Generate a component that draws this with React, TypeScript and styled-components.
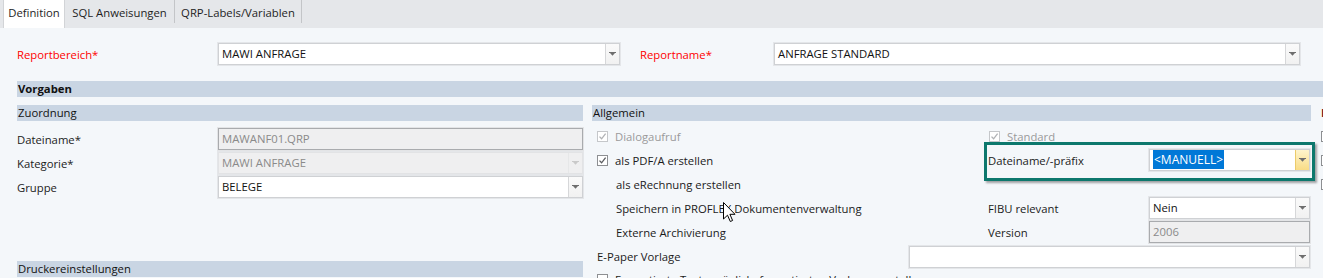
import React from 'react';
import styled, { createGlobalStyle } from 'styled-components';

const FONT = '"Open Sans", "Noto Sans", "Liberation Sans", sans-serif';

const Global = createGlobalStyle`
  html, body { margin: 0; padding: 0; background: #f4f7fa; overflow: hidden; }
  body { font-family: ${FONT}; font-size: 11.3px; color: #1b1b1b; }
  * { box-sizing: border-box; }
`;

const Page = styled.div`
  position: relative;
  width: 1323px;
  height: 278px;
  overflow: hidden;
  background: #f4f7fa;
`;

const TabBar = styled.div`
  display: flex;
  align-items: flex-start;
  height: 28px;
  padding-left: 3px;
  background: #e5e7ea;
`;

const Tab = styled.div<{ $active?: boolean; $w: number }>`
  width: ${(p) => p.$w}px;
  height: ${(p) => (p.$active ? 28 : 23)}px;
  line-height: 25px;
  text-align: center;
  white-space: nowrap;
  color: #1e1e1e;
  background: ${(p) => (p.$active ? '#ffffff' : 'transparent')};
  border-left: ${(p) => (p.$active ? '1px solid #d2d4d7' : 'none')};
  border-right: 1px solid ${(p) => (p.$active ? '#d2d4d7' : '#c3c5c8')};
`;

const Content = styled.div`
  padding: 15px 0 0 17px;
`;

const TopRow = styled.div`
  display: flex;
  align-items: center;
  height: 22px;
`;

const Label = styled.div<{ $w?: number; $red?: boolean; $ml?: number; $pl?: number }>`
  width: ${(p) => (p.$w ? `${p.$w}px` : 'auto')};
  margin-left: ${(p) => p.$ml ?? 0}px;
  padding-left: ${(p) => p.$pl ?? 0}px;
  color: ${(p) => (p.$red ? '#ff0000' : '#1b1b1b')};
  white-space: nowrap;
  flex-shrink: 0;
`;

const SectionBar = styled.div<{ $bold?: boolean; $mt?: number }>`
  height: 16px;
  line-height: 16px;
  margin-top: ${(p) => p.$mt ?? 0}px;
  padding-left: 1px;
  background: #c9d5e3;
  font-weight: ${(p) => (p.$bold ? 700 : 400)};
  color: #111;
  white-space: nowrap;
`;

const Columns = styled.div`
  display: flex;
  margin-top: 8px;
`;

const LeftCol = styled.div`
  width: 566px;
  flex-shrink: 0;
`;

const RightCol = styled.div`
  width: 719px;
  margin-left: 9px;
  flex-shrink: 0;
`;

const ThirdCol = styled.div`
  width: 120px;
  margin-left: 10px;
  flex-shrink: 0;
`;

const Rows = styled.div<{ $mt: number }>`
  margin-top: ${(p) => p.$mt}px;
`;

const LeftRow = styled.div`
  display: flex;
  align-items: center;
  height: 24px;
`;

const RightRow = styled.div<{ $h?: number; $top?: boolean }>`
  display: grid;
  grid-template-columns: 392px 165px 162px;
  align-items: ${(p) => (p.$top ? 'start' : 'center')};
  height: ${(p) => p.$h ?? 24}px;
  padding-top: ${(p) => (p.$top ? 3 : 0)}px;
`;

const PaperRow = styled.div`
  display: flex;
  align-items: center;
  height: 25px;
`;

const BoxShell = styled.div<{ $w: number; $disabled?: boolean; $plain?: boolean }>`
  display: flex;
  align-items: stretch;
  width: ${(p) => p.$w}px;
  height: 22px;
  flex-shrink: 0;
  background: ${(p) => (p.$disabled ? '#efeff0' : '#ffffff')};
  border: 1px solid
    ${(p) => (p.$plain ? '#a9abae' : p.$disabled ? '#e2e3e5' : '#cfd1d4')};
  box-shadow: 0 0 0 1px ${(p) => (p.$plain ? '#e3e4e6' : '#e4e6e9')};
`;

const BoxText = styled.div<{ $disabled?: boolean }>`
  flex: 1;
  padding-left: 3px;
  line-height: 20px;
  color: ${(p) => (p.$disabled ? '#8a8a8a' : '#111')};
  white-space: nowrap;
  overflow: hidden;
`;

const Selected = styled.span`
  background: #0078d7;
  color: #ffffff;
  padding: 1px 1px;
  font-size: 12px;
`;

const DropBtn = styled.div<{ $hover?: boolean; $disabled?: boolean }>`
  width: 14px;
  display: flex;
  align-items: center;
  justify-content: center;
  border-left: 1px solid
    ${(p) => (p.$hover ? '#eccb6a' : p.$disabled ? '#e6e7e8' : '#d6d7d9')};
  background: ${(p) =>
    p.$hover
      ? 'linear-gradient(#fef4cc, #f9dc86)'
      : p.$disabled
      ? '#efeff0'
      : 'linear-gradient(#fafafa, #f1f1f1)'};
`;

const Arrow = ({ color }: { color: string }) => (
  <svg width="7" height="4" viewBox="0 0 7 4">
    <rect x="0" y="0" width="7" height="1" fill={color} />
    <polygon points="1,1 6,1 3.5,3.8" fill={color} />
  </svg>
);

type ComboProps = {
  w: number;
  value?: React.ReactNode;
  disabled?: boolean;
  hover?: boolean;
  plain?: boolean;
};

const Combo = ({ w, value, disabled, hover, plain }: ComboProps) => (
  <BoxShell $w={w} $disabled={disabled || plain} $plain={plain}>
    <BoxText $disabled={disabled || plain}>{value}</BoxText>
    {!plain && (
      <DropBtn $hover={hover} $disabled={disabled}>
        <Arrow color={disabled ? '#c9c9c9' : '#6e6e6e'} />
      </DropBtn>
    )}
  </BoxShell>
);

const CheckBox = styled.span<{ $disabled?: boolean }>`
  display: inline-flex;
  align-items: center;
  justify-content: center;
  width: 11px;
  height: 11px;
  flex-shrink: 0;
  background: #ffffff;
  border: 1px solid ${(p) => (p.$disabled ? '#c5c7ca' : '#8d8f92')};
`;

const CheckItem = styled.div<{ $pl?: number; $disabled?: boolean }>`
  display: flex;
  align-items: center;
  gap: 7px;
  padding-left: ${(p) => p.$pl ?? 5}px;
  color: ${(p) => (p.$disabled ? '#9a9a9a' : '#1b1b1b')};
  white-space: nowrap;
`;

const Check = ({ checked, disabled }: { checked?: boolean; disabled?: boolean }) => (
  <CheckBox $disabled={disabled}>
    {checked && (
      <svg width="9" height="9" viewBox="0 0 9 9">
        <path
          d="M1.5 4.6 L3.6 6.8 L7.6 1.6"
          fill="none"
          stroke={disabled ? '#b0b2b5' : '#5a5c5f'}
          strokeWidth="1.3"
        />
      </svg>
    )}
  </CheckBox>
);

const ThirdHead = styled.div`
  height: 16px;
  line-height: 16px;
  color: #6e1423;
  font-weight: 700;
  white-space: nowrap;
`;

const ThirdRow = styled.div`
  display: flex;
  align-items: center;
  height: 24px;
`;

const Highlight = styled.div`
  position: absolute;
  left: 984px;
  top: 142px;
  width: 331px;
  height: 39px;
  border: 3px solid #0d786d;
  box-shadow: 2px 2px 2px rgba(0, 0, 0, 0.35);
  pointer-events: none;
`;

const Cursor = styled.svg`
  position: absolute;
  left: 723px;
  top: 202px;
`;

export default function App() {
  return (
    <>
      <Global />
      <Page>
        <TabBar>
          <Tab $active $w={62}>Definition</Tab>
          <Tab $w={110}>SQL Anweisungen</Tab>
          <Tab $w={127}>QRP-Labels/Variablen</Tab>
        </TabBar>
        <Content>
          <TopRow>
            <Label $w={201} $red>Reportbereich*</Label>
            <Combo w={402} value="MAWI ANFRAGE" />
            <Label $w={134} $ml={20} $red>Reportname*</Label>
            <Combo w={526} value="ANFRAGE STANDARD" />
          </TopRow>
          <SectionBar $bold $mt={16}>Vorgaben</SectionBar>
          <Columns>
            <LeftCol>
              <SectionBar>Zuordnung</SectionBar>
              <Rows $mt={6}>
                <LeftRow>
                  <Label $w={201}>Dateiname*</Label>
                  <Combo w={365} value="MAWANF01.QRP" plain />
                </LeftRow>
                <LeftRow>
                  <Label $w={201}>Kategorie*</Label>
                  <Combo w={365} value="MAWI ANFRAGE" disabled />
                </LeftRow>
                <LeftRow>
                  <Label $w={201}>Gruppe</Label>
                  <Combo w={365} value="BELEGE" />
                </LeftRow>
              </Rows>
              <SectionBar $mt={62}>Druckereinstellungen</SectionBar>
            </LeftCol>
            <RightCol>
              <SectionBar>Allgemein</SectionBar>
              <Rows $mt={3}>
                <RightRow>
                  <CheckItem $disabled>
                    <Check checked disabled />
                    Dialogaufruf
                  </CheckItem>
                  <CheckItem $disabled>
                    <Check checked disabled />
                    Standard
                  </CheckItem>
                </RightRow>
                <RightRow>
                  <CheckItem>
                    <Check checked />
                    als PDF/A erstellen
                  </CheckItem>
                  <Label $pl={4}>Dateiname/-präfix</Label>
                  <Combo w={161} value={<Selected>&lt;MANUELL&gt;</Selected>} hover />
                </RightRow>
                <RightRow>
                  <Label $pl={24}>als eRechnung erstellen</Label>
                </RightRow>
                <RightRow>
                  <Label $pl={24}>Speichern in PROFLEX Dokumentenverwaltung</Label>
                  <Label $pl={4}>FIBU relevant</Label>
                  <Combo w={161} value="Nein" />
                </RightRow>
                <RightRow>
                  <Label $pl={24}>Externe Archivierung</Label>
                  <Label $pl={4}>Version</Label>
                  <Combo w={161} value="2006" plain />
                </RightRow>
                <PaperRow>
                  <Label $w={317} $pl={5}>E-Paper Vorlage</Label>
                  <Combo w={401} value="" />
                </PaperRow>
                <RightRow $top>
                  <CheckItem>
                    <Check />
                    Formatierte Texte möglich, formatierten Vorlagen erstellen
                  </CheckItem>
                </RightRow>
              </Rows>
            </RightCol>
            <ThirdCol>
              <ThirdHead>Rechnung</ThirdHead>
              <Rows $mt={3}>
                <ThirdRow><Check /></ThirdRow>
                <ThirdRow><Check /></ThirdRow>
                <ThirdRow><Check /></ThirdRow>
              </Rows>
            </ThirdCol>
          </Columns>
        </Content>
        <Highlight />
        <Cursor width="13" height="21" viewBox="0 0 13 21">
          <path
            d="M0.5 0.5 L0.5 17 L4.5 13.2 L7.3 19.5 L9.6 18.5 L6.9 12.3 L12 12.3 Z"
            fill="#ffffff"
            stroke="#000000"
            strokeWidth="1"
            strokeLinejoin="round"
          />
        </Cursor>
      </Page>
    </>
  );
}
